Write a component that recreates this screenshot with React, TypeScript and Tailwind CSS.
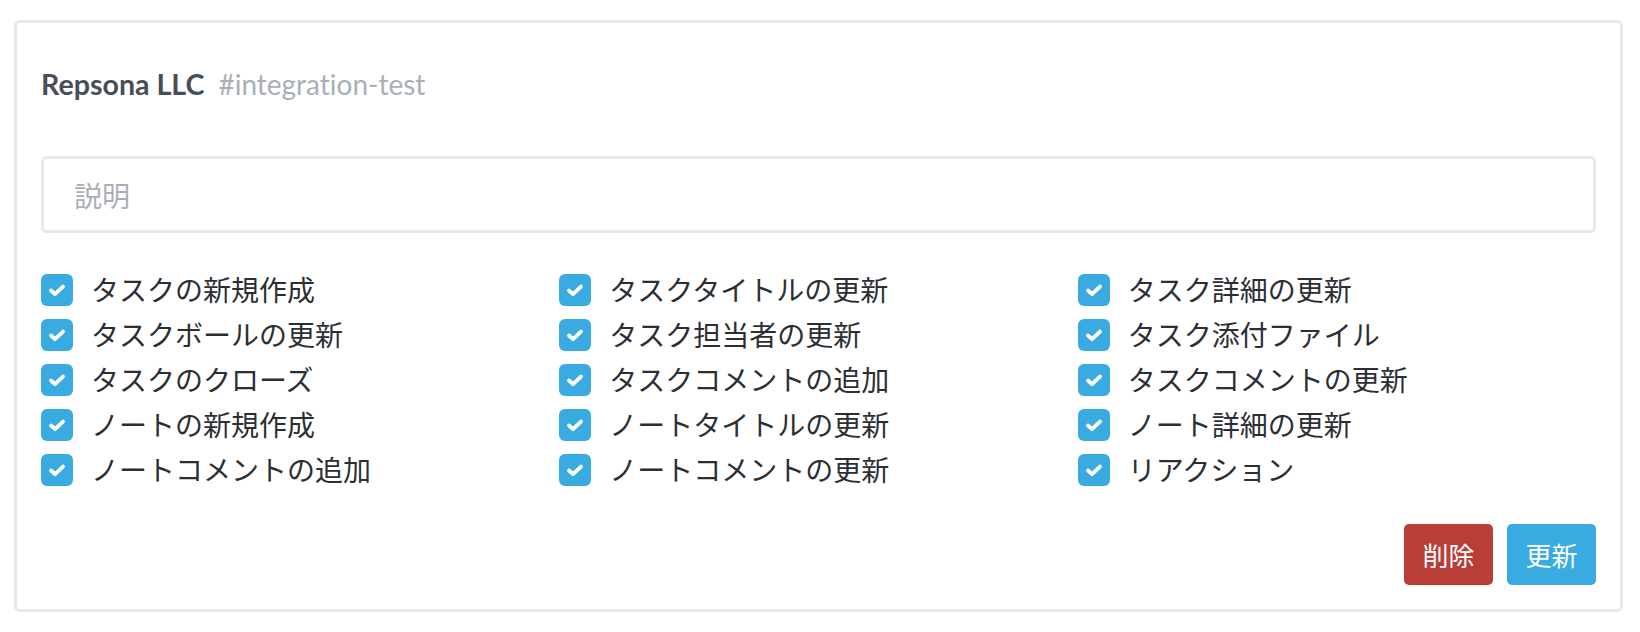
import React from "react";

const items: string[][] = [
  ["タスクの新規作成", "タスクタイトルの更新", "タスク詳細の更新"],
  ["タスクボールの更新", "タスク担当者の更新", "タスク添付ファイル"],
  ["タスクのクローズ", "タスクコメントの追加", "タスクコメントの更新"],
  ["ノートの新規作成", "ノートタイトルの更新", "ノート詳細の更新"],
  ["ノートコメントの追加", "ノートコメントの更新", "リアクション"],
];

const jp = { fontFamily: '"Noto Sans CJK JP", "Noto Sans", sans-serif' };

function Check() {
  return (
    <span className="flex h-[32px] w-[32px] shrink-0 items-center justify-center rounded-[6px] bg-[#3aabe1]">
      <svg width="32" height="32" viewBox="0 0 32 32">
        <path
          d="M10 16.5 L14 20.2 L22 12.6"
          fill="none"
          stroke="#ffffff"
          strokeWidth="3.8"
          strokeLinecap="round"
          strokeLinejoin="round"
        />
      </svg>
    </span>
  );
}

export default function App() {
  const flat = items.flat();
  return (
    <div className="min-h-[632px] w-[1640px] bg-white pl-[14px] pt-[20px]">
      <div className="w-[1609px] rounded-[5px] border-[3px] border-[#e8e9ec] bg-white px-6 pb-6 pt-[40px]">
        <div
          className="flex h-[42px] items-center text-[28.6px] leading-[42px] [font-variant-ligatures:none]"
          style={{ fontFamily: 'Lato, "Noto Sans", sans-serif' }}
        >
          <span className="font-bold text-[#474e57]">Repsona LLC</span>
          <span className="ml-[14px] text-[28px] text-[#a9afb7]">#integration-test</span>
        </div>

        <input
          className="mt-[51px] block h-[77px] w-full rounded-[5px] border-[3px] border-[#e8e9ec] bg-white pl-[30px] text-[28px] text-[#2c3036] outline-none placeholder:text-[#a9afb7]"
          style={jp}
          placeholder="説明"
        />

        <div className="mt-[34px] grid grid-cols-3">
          {flat.map((label, i) => (
            <div key={i} className="flex h-[45px] items-center">
              <Check />
              <span
                className="ml-[18px] whitespace-nowrap text-[28px] leading-[45px] text-[#2b2f34]"
                style={jp}
              >
                {label}
              </span>
            </div>
          ))}
        </div>

        <div className="mt-[32px] flex justify-end gap-[14px]">
          <button
            className="flex h-[61px] w-[89px] items-center justify-center rounded-[5px] bg-[#b83e37] text-[26px] text-white"
            style={jp}
          >
            削除
          </button>
          <button
            className="flex h-[61px] w-[89px] items-center justify-center rounded-[5px] bg-[#3aabe1] text-[26px] text-white"
            style={jp}
          >
            更新
          </button>
        </div>
      </div>
    </div>
  );
}
